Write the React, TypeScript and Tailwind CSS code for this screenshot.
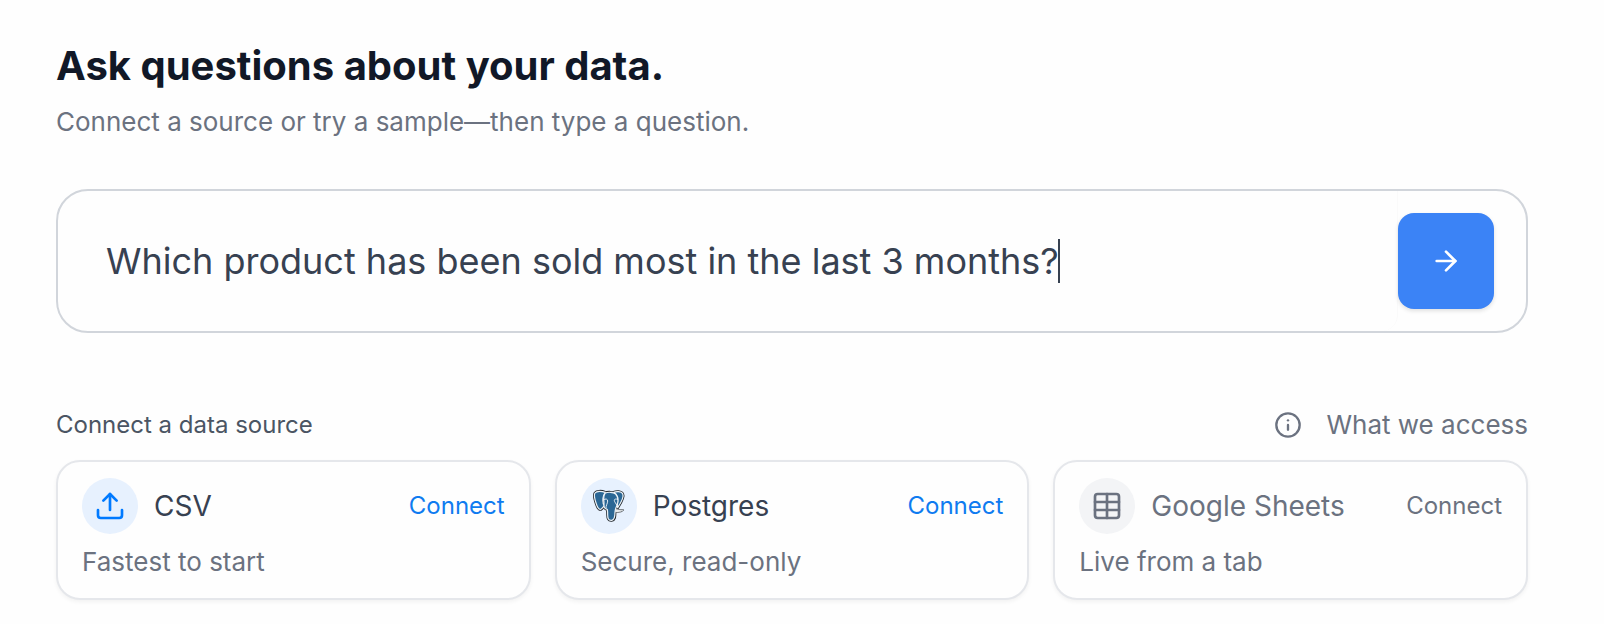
import type { ReactNode } from "react";
import { ArrowRight, Info, Table, Upload } from "lucide-react";

const LEFT_EAR =
  "M36 7C27 3 11 2 6 9 2 15 7 34 12 47c4 10 9 14 14 9 4-4 6-6 8-9-5-6-5-13-4-22 1-7 2-12 7-18z";
const RIGHT_EAR =
  "M62 7c9-4 23-3 27 4 5 9-5 27-15 42-2-8-1-14 0-20 1-9-2-19-12-26z";
const TRUNK =
  "M36 10c8-5 25-4 32 2 8 9 8 21 5 31-3 9-7 14-7 24 0 14-1 23-10 24-10 1-12-6-12-16 0-7 0-12-1-17-6 0-10-6-10-12 0-7 0-12-1-18 0-8 1-14 4-18z";
const TUSK = "M67 58c7-2 8 4 24 2-5 5-16 7-24 5z";

function PostgresLogo() {
  return (
    <svg viewBox="0 0 96 96" className="size-8 overflow-visible" fill="none" strokeLinecap="round" strokeLinejoin="round">
      <g stroke="#22272c" strokeWidth="8.500">
        <path d={LEFT_EAR} />
        <path d={RIGHT_EAR} />
        <path d={TRUNK} />
        <path d={TUSK} stroke="#4a4f54" strokeWidth="4.500" />
      </g>
      <g fill="#2b6795" stroke="#eef3f7" strokeWidth="3.600">
        <path d={TUSK} fill="#e5e8ea" strokeWidth="1" />
        <path d={LEFT_EAR} />
        <path d={RIGHT_EAR} />
        <path d={TRUNK} />
      </g>
      <g stroke="#eef3f7" strokeWidth="2.800">
        <path d="M32 29c6-4 12-2 12 4 0 8-6 13-5 22" />
        <path d="M74 28c-5-2-10-1-10 3 0 6 6 9 7 14" />
      </g>
    </svg>
  );
}

type Source = {
  name: string;
  note: string;
  icon: ReactNode;
  badge: string;
  title: string;
  action: string;
};

const sources: Source[] = [
  {
    name: "CSV",
    note: "Fastest to start",
    icon: <Upload className="size-8 text-[#007aff]" />,
    badge: "bg-[#e7f1fe]",
    title: "text-[#374151]",
    action: "text-[#0f7bf0]",
  },
  {
    name: "Postgres",
    note: "Secure, read-only",
    icon: <PostgresLogo />,
    badge: "bg-[#e7f1fe]",
    title: "text-[#374151]",
    action: "text-[#0f7bf0]",
  },
  {
    name: "Google Sheets",
    note: "Live from a tab",
    icon: <Table className="size-8 text-[#6b7280]" />,
    badge: "bg-[#f3f4f6]",
    title: "text-[#6b7280]",
    action: "text-[#6b7280]",
  },
];

function SourceCard({ source }: { source: Source }) {
  return (
    <div className="h-[140px] rounded-[24px] border-2 border-[#e5e7eb] bg-[#fefefe] px-6 py-4 shadow-[0_2px_4px_rgba(0,0,0,0.05)]">
      <div className="flex h-14 items-center">
        <span className={`flex size-14 items-center justify-center rounded-full ${source.badge}`}>{source.icon}</span>
        <span className={`ml-4 text-[28px] leading-10 ${source.title}`}>{source.name}</span>
        <button className={`ml-auto text-[24px] leading-8 ${source.action}`}>Connect</button>
      </div>
      <p className="mt-2 text-[26px] leading-10 text-[#6b7280]">{source.note}</p>
    </div>
  );
}

export default function App() {
  return (
    <main className="h-[624px] w-[1604px] overflow-hidden bg-[#fefefe] px-[56px] pt-[42px] font-['Inter',sans-serif]">
      <h1 className="text-[40px] leading-[48px] font-bold text-[#111827]">Ask questions about your data.</h1>
      <p className="mt-3 text-[26px] leading-10 text-[#6b7280]">Connect a source or try a sample—then type a question.</p>
      <div className="mt-[47px] flex h-36 w-[1472px] items-center rounded-[32px] border-2 border-[#d1d5db] pr-8">
        <div className="flex h-full flex-1 items-center rounded-br-[16px] border-r border-[#fafafa] pl-12">
          <span className="text-[36px] leading-[44px] text-[#374151]">Which product has been sold most in the last 3 months?</span>
          <span className="-ml-px h-11 w-[2px] bg-[#374151]" />
        </div>
        <button className="flex size-24 items-center justify-center rounded-[16px] bg-[#3b83f6] text-white shadow-[0_2px_4px_rgba(0,0,0,0.12)]">
          <ArrowRight className="size-8" />
        </button>
      </div>
      <div className="mt-[72px] flex h-10 w-[1472px] items-center justify-between">
        <h2 className="text-[24px] leading-10 text-[#4b5563]">Connect a data source</h2>
        <div className="flex items-center gap-6 text-[#6b7280]">
          <Info className="size-7" />
          <span className="text-[26px] leading-10">What we access</span>
        </div>
      </div>
      <div className="mt-[15px] grid w-[1472px] grid-cols-3 gap-6">
        {sources.map((source) => (
          <SourceCard key={source.name} source={source} />
        ))}
      </div>
    </main>
  );
}
